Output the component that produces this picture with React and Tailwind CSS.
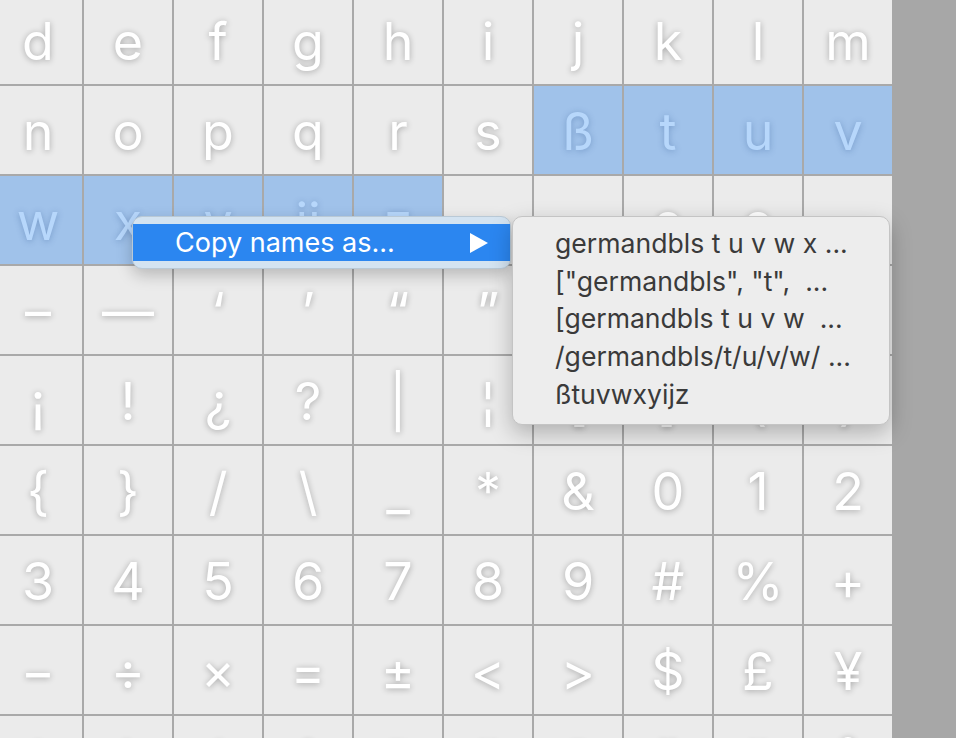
import React from 'react';

const rows = [
  ['d', 'e', 'f', 'g', 'h', 'i', 'j', 'k', 'l', 'm'],
  ['n', 'o', 'p', 'q', 'r', 's', 'ß', 't', 'u', 'v'],
  ['w', 'x', 'y', 'ĳ', 'z', '.', ',', 'e', 'o', '-'],
  ['–', '—', '‘', '’', '“', '”', '‚', '„', '‹', '›'],
  ['¡', '!', '¿', '?', '|', '¦', '[', ']', '(', ')'],
  ['{', '}', '/', '\\', '_', '*', '&', '0', '1', '2'],
  ['3', '4', '5', '6', '7', '8', '9', '#', '%', '+'],
  ['−', '÷', '×', '=', '±', '<', '>', '$', '£', '¥'],
  ['˙', '`', '´', 'ˆ', '˜', '¨', '¯', 'ˇ', '˘', '˚'],
];

// selected glyphs: row 1 cols 6-9, row 2 cols 0-4
const isSelected = (r, c) => (r === 1 && c >= 6) || (r === 2 && c <= 4);

const copyFormats = [
  'germandbls t u v w x ...',
  '["germandbls", "t",  ...',
  '[germandbls t u v w  ...',
  '/germandbls/t/u/v/w/ ...',
  'ßtuvwxyijz',
];

const GlyphCell = ({ glyph, selected }) => {
  if (selected) {
    return (
      <div className="flex items-center justify-center bg-[#a0c2ea] pt-[3px] text-[52px] leading-[88px] text-[#b7d7fb] [text-shadow:0_1px_6px_rgba(40,80,140,0.35)]">
        {glyph}
      </div>
    );
  }
  return (
    <div className="flex items-center justify-center bg-[#ebebeb] pt-[3px] text-[52px] leading-[88px] text-white [text-shadow:0_1px_6px_rgba(0,0,0,0.3)]">
      {glyph}
    </div>
  );
};

const MainMenu = () => (
  <div className="absolute left-[132px] top-[216px] w-[379px] rounded-[10px] border border-[#b9c9d6] bg-[#d3e3f1] py-[7px] shadow-[0_6px_16px_rgba(0,0,0,0.22)]">
    <div className="flex h-[37px] items-center justify-between bg-[#2b86f0] pl-[42px] pr-[22px] text-[27px] text-white">
      <span className="leading-[37px]">Copy names as...</span>
      <svg width="18" height="20" viewBox="0 0 18 20">
        <polygon points="0,0 18,10 0,20" fill="#ffffff" />
      </svg>
    </div>
  </div>
);

const SubMenu = () => (
  <div className="absolute left-[512px] top-[216px] w-[378px] rounded-[10px] border border-[#c4c4c4] bg-[#ededed] pb-[10px] pt-[8px] shadow-[0_8px_22px_rgba(0,0,0,0.25)]">
    {copyFormats.map((f) => (
      <div key={f} className="whitespace-pre pl-[42px] text-[26.6px] leading-[37.7px] text-[#3a3a3a]">
        {f}
      </div>
    ))}
  </div>
);

export default function App() {
  return (
    <div className="relative flex h-[738px] w-[956px] overflow-hidden bg-[#a7a7a7] font-['Inter','Liberation_Sans',sans-serif]">
      <div className="h-[738px] w-[892px] overflow-hidden">
        <div className="-ml-[6px] -mt-[4px] grid w-max grid-cols-[repeat(10,88px)] auto-rows-[88px] gap-[2px] bg-[#a9a9a9]">
          {rows.map((row, r) =>
            row.map((g, c) => (
              <GlyphCell key={`${r}-${c}`} glyph={g} selected={isSelected(r, c)} />
            ))
          )}
        </div>
      </div>
      <MainMenu />
      <SubMenu />
    </div>
  );
}
